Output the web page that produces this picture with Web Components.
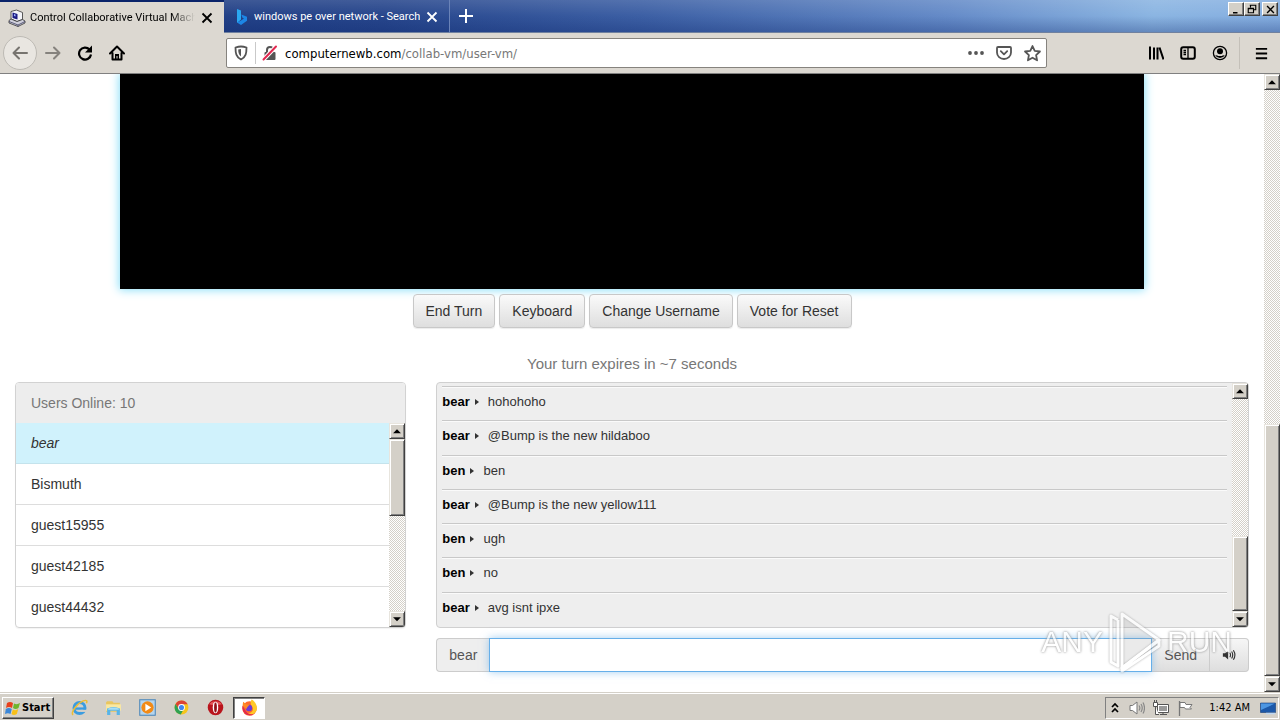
<!DOCTYPE html>
<html lang="en">
<head>
<meta charset="utf-8">
<title>Control Collaborative Virtual Machines</title>
<style>
  html, body { height: 100%; }
  body {
    margin: 0;
    display: flex;
    flex-direction: column;
    overflow: hidden;
    background: #fff;
    font-family: "Liberation Sans", Arial, sans-serif;
    font-size: 14px;
    --face: #d4d0c8;
    --ui-font: "DejaVu Sans Condensed", "DejaVu Sans", sans-serif;
    --tab-font: Roboto, "Liberation Sans", sans-serif;
  }
</style>
</head>
<body>
  <browser-tabs>
    <browser-tab active label="Control Collaborative Virtual Machi"><ui-icon name="vm" size="18"></ui-icon></browser-tab>
    <browser-tab label="windows pe over network - Search"><ui-icon name="bing" size="16"></ui-icon></browser-tab>
  </browser-tabs>
  <browser-toolbar></browser-toolbar>
  <page-view>
    <vm-screen></vm-screen>
    <vm-actions>
      <vm-button>End Turn</vm-button>
      <vm-button>Keyboard</vm-button>
      <vm-button>Change Username</vm-button>
      <vm-button>Vote for Reset</vm-button>
    </vm-actions>
    <turn-status>Your turn expires in ~7 seconds</turn-status>
    <vm-columns>
      <user-list slot="side" count="10"></user-list>
      <chat-box slot="main" username="bear"></chat-box>
    </vm-columns>
  </page-view>
  <task-bar></task-bar>
  <any-watermark></any-watermark>

<script>
const ICONS = {
  vm: `<path fill="#f4f4f8" stroke="#333" stroke-width=".8" d="M3 2.500L8.500 1l6 2.500v7L9 12.500 3 10z"/><path fill="#1c1c84" d="M4.500 3.500l5 1.500v5.500L4.500 9z"/><path fill="#9fb4ff" d="M6 5l1.500.5v2L6 7z"/><path fill="#cfcfdb" stroke="#333" stroke-width=".8" d="M1 11.500L3 10l6 2.500L14.500 10.500 17 12v2l-7 3.500-9-3.500z"/><path stroke="#3c3c60" stroke-width=".8" d="M1 12.500l9 3.500 7-3.500M10 16v1.500"/>`,
  bing: `<path fill="#2aa8f2" d="M3 0l4 1.500v9L3 14z"/><path fill="#1c86e6" d="M7 11.500l3-2-1.500-.8L7.300 5.500 13 7.800v4L7 16l-4-2.500z"/>`,
  close: `<path stroke="currentColor" stroke-width="1.800" d="M3.500 3.500l9 9m0-9l-9 9"/>`,
  plus: `<path stroke="currentColor" stroke-width="2" d="M8 1v14M1 8h14"/>`,
  back: `<path fill="none" stroke="currentColor" stroke-width="2" stroke-linecap="round" stroke-linejoin="round" d="M15 8H1.500M7 2.500L1.500 8 7 13.500"/>`,
  forward: `<path fill="none" stroke="currentColor" stroke-width="2" stroke-linecap="round" stroke-linejoin="round" d="M1 8h13.500M9 2.500L14.500 8 9 13.500"/>`,
  reload: `<path fill="none" stroke="currentColor" stroke-width="2.200" d="M12.500 4.500A6 6 0 1 0 14 9.500"/><path fill="currentColor" d="M15 .5v7H8z"/>`,
  home: `<path fill="none" stroke="currentColor" stroke-width="2" stroke-linejoin="round" stroke-linecap="round" d="M1 8.500L8 1.500l7 7M3.500 8v6.500h9V8"/><path fill="currentColor" d="M6 14V9h4v5H8.500v-3h-1v3z"/>`,
  shield: `<path fill="none" stroke="currentColor" stroke-width="1.800" stroke-linejoin="round" d="M8 1.500c2 0 4 .5 5.500 1C13.500 8 13 12 8 14.500 3 12 2.500 8 2.500 2.500 4 2 6 1.500 8 1.500z"/><path fill="currentColor" d="M8 4v7.500C6 10 5.300 8 5.200 4.400z"/>`,
  lock: `<path fill="none" stroke="#555" stroke-width="2" d="M5 7V5a3 3 0 0 1 6 0v2"/><rect x="2.500" y="7" width="11" height="8" rx="1" fill="#555"/><path stroke="#fff" stroke-width="4" d="M1.500 14.500L14 1.500"/><path stroke="#e22850" stroke-width="2" stroke-linecap="round" d="M1.500 14.500L14 1.500"/>`,
  dots: `<g fill="currentColor"><circle cx="2" cy="8" r="1.900"/><circle cx="8" cy="8" r="1.900"/><circle cx="14" cy="8" r="1.900"/></g>`,
  pocket: `<path fill="none" stroke="currentColor" stroke-width="1.800" stroke-linejoin="round" d="M2 2h12a1 1 0 0 1 1 1v4.500a7 6.500 0 0 1-14 0V3a1 1 0 0 1 1-1z"/><path fill="none" stroke="currentColor" stroke-width="1.800" stroke-linecap="round" stroke-linejoin="round" d="M4.800 6.200L8 9.300l3.200-3.100"/>`,
  star: `<path fill="none" stroke="currentColor" stroke-width="1.700" stroke-linejoin="round" d="M8 1l2.100 4.500 4.900.6-3.600 3.400.9 4.900L8 12l-4.300 2.400.9-4.900L1 6.100l4.900-.6z"/>`,
  library: `<path stroke="currentColor" stroke-width="2" d="M2 1.500v13M6 2.500v12M9.500 2.500v12M11.500 2.500l4 12"/>`,
  sidebar: `<rect x="1.200" y="2.200" width="13.600" height="11.600" rx="2" fill="none" stroke="currentColor" stroke-width="2"/><path stroke="currentColor" stroke-width="1.300" d="M8 3v10M3.500 5.500H6M3.500 7.500H6M3.500 9.500H6"/>`,
  account: `<circle cx="8" cy="8" r="6.600" fill="none" stroke="currentColor" stroke-width="1.300"/><circle cx="8" cy="6.300" r="3" fill="currentColor"/><path fill="currentColor" d="M3.200 10.200q2.300-.2 3 .8h3.600q.7-1 3-.8a5.500 5.500 0 0 1-9.600 0z"/>`,
  menu: `<path stroke="currentColor" stroke-width="2" d="M2 3h12M2 8h12M2 13h12"/>`,
  minimize: `<path stroke="#000" stroke-width="2" d="M4 13h6"/>`,
  restore: `<path fill="none" stroke="#000" stroke-width="1.500" d="M6 6V3h7v6h-3M3 7h7v6H3zM5 3h8M3 7.500h7"/>`,
  winclose: `<path stroke="#000" stroke-width="2" d="M3 3l10 10M13 3L3 13"/>`,
  up: `<path fill="#000" d="M3.500 10.500h9L8 6z"/>`,
  down: `<path fill="#000" d="M3.500 6h9L8 10.500z"/>`,
  sound: `<path fill="#333" d="M1 6h2.500L7 3v10l-3.500-3H1z"/><path fill="none" stroke="#333" stroke-width="1.300" d="M9 5.500q1.500 2.500 0 5M11 4q2.500 4 0 8M13 2.500q3.500 5.500 0 11"/>`,
  flag: `<path fill="#e8401c" d="M2 3q3-2 6 0L7 8Q4 6 1 8z"/><path fill="#6fb52c" d="M9 3.500q3 1.500 6-.5l-1.500 5q-3 2-5.500 0z"/><path fill="#3b87d8" d="M.8 9q3-2 6 0l-1.300 5Q3 12.500 0 14z"/><path fill="#f8c018" d="M7.800 9.500q3 1.500 5.500-.5l-1.500 5q-3 2-5.300 0z"/>`,
  ie: `<circle cx="8" cy="8.500" r="5.200" fill="none" stroke="#3a9ce0" stroke-width="2.800"/><path stroke="#3a9ce0" stroke-width="2.200" d="M4 9h9.500"/><path fill="#d4d0c8" d="M9 10.200h6v2H9z"/><path fill="none" stroke="#edbd33" stroke-width="1.400" d="M2 15C-1 13 6 4 11.500 1.800 15 .5 15.500 2 14.500 4"/>`,
  folder: `<path fill="#e9c65f" d="M1 3l1-1h5l1 1.500h6V12H1z"/><path fill="#f9e8a2" d="M1 5h14v6H1z"/><path fill="#58b4e8" d="M2 9q6-3 12 0v6h-3v-4H5v4H2z"/><path fill="#a7def5" d="M3 9q5-2 10 0v1H3z"/>`,
  player: `<rect x=".7" y=".7" width="14.600" height="14.600" fill="#b5d5ee" stroke="#4d87b9"/><circle cx="8" cy="8" r="5.800" fill="#f28a16"/><path fill="#fff" d="M6 4.500l5.500 3.500L6 11.500z"/>`,
  chrome: `<circle cx="8" cy="8" r="6.500" fill="#f6c51c"/><path fill="#dc4335" d="M2.400 4.700A6.500 6.500 0 0 1 13.800 5H8L5.300 9.500z"/><path fill="#2fa152" d="M2.400 4.700L5.300 9.500 9.500 10.500 7.300 14.500A6.500 6.500 0 0 1 2.400 4.700z"/><circle cx="8" cy="8" r="3.200" fill="#fff"/><circle cx="8" cy="8" r="2.400" fill="#4286ee"/>`,
  opera: `<circle cx="8" cy="8" r="7.300" fill="#b9141c"/><path fill="#e4575a" d="M2 5a7 6 0 0 1 12 0Q8 7 2 5z"/><ellipse cx="8" cy="8" rx="2.600" ry="5.500" fill="#fff"/><ellipse cx="8" cy="8" rx="1.300" ry="4.700" fill="#8f1017"/>`,
  firefox: `<circle cx="8" cy="9" r="6.800" fill="#ff6b2b"/><path fill="#ffc928" d="M10 .5c4 2 6 7 4.500 10.500-2 4-7 4-9 2 5 1 7-3 5-6-1.500-2-2-4-.5-6.500z"/><path fill="#e22b4e" d="M1.500 6q-1 5 2.500 8 4 2.500 8 .5-6 0-8-4z"/><circle cx="7.500" cy="8.500" r="3" fill="#6d3bd4"/><path fill="#ff8a24" d="M1.500 6L2 2.500 5 5l3 .5-2 2-1 2z"/>`,
  chevrons: `<path fill="none" stroke="#000" stroke-width="1.700" d="M5 7l3-3 3 3M5 12l3-3 3 3"/>`,
  speaker: `<path fill="#fff" stroke="#777" d="M1 5.500h2.500L8 2v12l-4.500-3.500H1z"/><path fill="none" stroke="#888" stroke-width="1.200" d="M10 5.500q1.700 2.500 0 5M12 4q2.500 4 0 8M14 2.500q3 5.500 0 11"/>`,
  network: `<path fill="#fff" stroke="#555" d="M4.500 4.500h11v8h-11z"/><path fill="#999" d="M6 6h8v5H6z"/><path stroke="#555" d="M7 14.500h7M10 13v1"/><path fill="#fff" stroke="#555" d="M.5 2.500h4v4h-4zM2.500 6.500v8H6M1.500 0v2M3.500 0v2"/>`,
  action: `<path fill="none" stroke="#777" stroke-width="1.300" d="M2.500 1v15"/><path fill="#fff" stroke="#777" d="M3 2.500h5l1 2h6l-2 3 1.500 1.500H8.500l-1-1.500H3z"/>`,
  desktop: `<path fill="#1c58a8" stroke="#143d78" stroke-width=".6" d="M.5 3h15v9.500H.5z"/><path fill="#4c96e2" d="M1 3.500h14L1 10z"/><path stroke="#bcd7f3" stroke-width="1.500" d="M6 13.500h9"/>`,
};

// Small helper: attach an open root and fill it from a template.
function mount(host, html) {
  const tpl = document.createElement('template');
  tpl.innerHTML = html;
  host.attachShadow({ mode: 'open' }).appendChild(tpl.content.cloneNode(true));
}

class UiIcon extends HTMLElement {
  constructor() {
    super();
    this.attachShadow({ mode: 'open' });
  }
  connectedCallback() {
    const size = this.getAttribute('size') || 16;
    this.shadowRoot.innerHTML = `
      <style>:host { display: block; flex: none; } svg { display: block; }</style>
      <svg width="${size}" height="${size}" viewBox="0 0 ${this.getAttribute('name') === 'vm' ? '18 18' : '16 16'}" fill="none" aria-hidden="true">${ICONS[this.getAttribute('name')] || ''}</svg>`;
  }
}
customElements.define('ui-icon', UiIcon);

// Classic scroll bar. before / thumb / after are track proportions.
class ClassicScrollbar extends HTMLElement {
  connectedCallback() {
    const grow = n => Number(this.getAttribute(n) || 0);
    mount(this, `
      <style>
        :host { display: flex; flex-direction: column; width: 16px; flex: none; }
        button, .thumb {
          box-sizing: border-box; background: var(--face);
          border: 1px solid; border-color: #e8e5de #404040 #404040 #e8e5de;
          box-shadow: inset 1px 1px #fff, inset -1px -1px #808080;
        }
        button { width: 16px; height: 16px; padding: 0; flex: none; display: grid; place-items: center; }
        .track {
          flex: 1; display: flex; flex-direction: column;
          background: repeating-conic-gradient(#fff 0 25%, var(--face) 0 50%) 0 0 / 2px 2px;
        }
      </style>
      <button aria-label="Scroll up"><ui-icon name="up" size="14"></ui-icon></button>
      <div class="track">
        <div style="flex: ${grow('before')} 0 0"></div>
        <div class="thumb" style="flex: ${grow('thumb')} 0 0"></div>
        <div style="flex: ${grow('after')} 0 0"></div>
      </div>
      <button aria-label="Scroll down"><ui-icon name="down" size="14"></ui-icon></button>`);
  }
}
customElements.define('classic-scrollbar', ClassicScrollbar);

class BrowserTab extends HTMLElement {
  constructor() {
    super();
    mount(this, `
      <style>
        :host {
          display: flex; align-items: center; box-sizing: border-box;
          width: 226px; height: 33px; padding: 0 9px 0 10px; gap: 4px;
          color: #fff; border-right: 1px solid #6a83b8;
          font: 11px var(--tab-font);
        }
        :host([active]) {
          width: 224px; padding-left: 8px; color: #000; background: #dcd8d1;
          border-top: 2px solid #0a246a; border-right: 0;
        }
        .label { flex: 1; white-space: nowrap; overflow: hidden; }
        :host([active]) .label {
          -webkit-mask-image: linear-gradient(to left, transparent, #000 24px);
          mask-image: linear-gradient(to left, transparent, #000 24px);
        }
        button { border: 0; padding: 0; background: none; color: inherit; }
      </style>
      <slot></slot>
      <span class="label"></span>
      <button aria-label="Close tab"><ui-icon name="close" size="16"></ui-icon></button>`);
  }
  connectedCallback() {
    this.shadowRoot.querySelector('.label').textContent = this.getAttribute('label');
  }
}
customElements.define('browser-tab', BrowserTab);

class BrowserTabs extends HTMLElement {
  constructor() {
    super();
    mount(this, `
      <style>
        :host {
          display: flex; flex: none; height: 33px; box-sizing: border-box;
          border-bottom: 1px solid #70819f;
          background:
            linear-gradient(rgba(255,255,255,.12), rgba(255,255,255,0) 50%, rgba(10,36,106,.3)),
            linear-gradient(97deg, #1c3a80, #27468c 30%, #3c5fa4 50%, #658bc8 74%, #8bb5e2 90%, #85aee0);
        }
        button { border: 0; background: none; padding: 0; color: #fff; }
        .new { width: 32px; display: grid; place-items: center; }
        .window { margin-left: auto; display: flex; align-items: flex-start; padding: 2px 2px 0 0; }
        .window button {
          width: 16px; height: 14px; box-sizing: border-box; background: var(--face);
          border: 1px solid; border-color: #fff #404040 #404040 #fff;
          box-shadow: inset -1px -1px #808080;
          display: grid; place-items: center;
        }
        .window button:last-child { margin-left: 2px; }
      </style>
      <slot></slot>
      <button class="new" aria-label="New tab"><ui-icon name="plus" size="16"></ui-icon></button>
      <div class="window">
        <button aria-label="Minimize"><ui-icon name="minimize" size="12"></ui-icon></button>
        <button aria-label="Restore"><ui-icon name="restore" size="12"></ui-icon></button>
        <button aria-label="Close"><ui-icon name="winclose" size="11"></ui-icon></button>
      </div>`);
  }
}
customElements.define('browser-tabs', BrowserTabs);

class BrowserToolbar extends HTMLElement {
  constructor() {
    super();
    mount(this, `
      <style>
        :host {
          display: flex; align-items: center; flex: none; box-sizing: border-box; height: 41px;
          background: #dcd8d1; border-bottom: 1px solid #808080; color: #000;
        }
        button { border: 0; background: none; padding: 0; color: inherit; width: 32px; height: 32px; display: grid; place-items: center; }
        nav { display: flex; flex: 0 0 226px; box-sizing: border-box; padding-left: 3px; align-items: center; }
        .back { width: 34px; height: 34px; border: 1px solid #bdbab4; border-radius: 50%; background: #e9e6e1; color: #77746f; }
        .fwd { color: #85827d; }
        .url {
          flex: 0 1 821px; box-sizing: border-box; height: 30px; display: flex; align-items: center;
          background: #fff; border: 1px solid #86837e; border-radius: 2px; color: #555;
        }
        .url button { width: 28px; }
        .sep { width: 1px; height: 22px; background: #c9c9c9; }
        .address { flex: 1; min-width: 0; padding-left: 1px; font: 13px var(--ui-font); }
        .address a { color: #777; text-decoration: none; white-space: nowrap; }
        .address b { color: #000; font-weight: normal; }
        .tools { display: flex; margin-left: auto; padding-right: 3px; }
        .tools .sep { height: 32px; margin: 0 5px 0 3px; background: #c4c0b9; }
      </style>
      <nav>
        <button class="back" aria-label="Back"><ui-icon name="back"></ui-icon></button>
        <button class="fwd" aria-label="Forward"><ui-icon name="forward"></ui-icon></button>
        <button aria-label="Reload"><ui-icon name="reload"></ui-icon></button>
        <button aria-label="Home"><ui-icon name="home"></ui-icon></button>
      </nav>
      <div class="url">
        <button aria-label="Tracking protection"><ui-icon name="shield"></ui-icon></button>
        <span class="sep"></span>
        <button aria-label="Connection is not secure"><ui-icon name="lock"></ui-icon></button>
        <div class="address"><a href="#"><b>computernewb.com</b>/collab-vm/user-vm/</a></div>
        <button aria-label="Page actions"><ui-icon name="dots"></ui-icon></button>
        <button aria-label="Save to Pocket"><ui-icon name="pocket"></ui-icon></button>
        <button aria-label="Bookmark"><ui-icon name="star" size="17"></ui-icon></button>
      </div>
      <div class="tools">
        <button aria-label="Library"><ui-icon name="library"></ui-icon></button>
        <button aria-label="Sidebars"><ui-icon name="sidebar"></ui-icon></button>
        <button aria-label="Account"><ui-icon name="account"></ui-icon></button>
        <span class="sep"></span>
        <button aria-label="Menu"><ui-icon name="menu" size="15"></ui-icon></button>
      </div>`);
  }
}
customElements.define('browser-toolbar', BrowserToolbar);

class PageView extends HTMLElement {
  constructor() {
    super();
    mount(this, `
      <style>
        :host { display: flex; flex: 1; min-height: 0; background: #fff; }
        main { flex: 1; min-width: 0; overflow: hidden; }
      </style>
      <main><slot></slot></main>
      <classic-scrollbar before="335" thumb="251" after="0"></classic-scrollbar>`);
  }
}
customElements.define('page-view', PageView);

class VmScreen extends HTMLElement {
  constructor() {
    super();
    mount(this, `
      <style>
        :host {
          display: block; max-width: 1024px; height: 215px; margin: 0 auto;
          background: #000; box-shadow: 0 0 9px 1px #8adff8;
        }
      </style>`);
  }
}
customElements.define('vm-screen', VmScreen);

class VmActions extends HTMLElement {
  constructor() {
    super();
    mount(this, `
      <style>:host { display: flex; justify-content: center; gap: 4px; margin-top: 5px; }</style>
      <slot></slot>`);
  }
}
customElements.define('vm-actions', VmActions);

class VmButton extends HTMLElement {
  constructor() {
    super();
    mount(this, `
      <style>
        :host { display: block; }
        button {
          box-sizing: border-box; height: 34px; padding: 0 12px;
          border: 1px solid #c8c8c8; border-radius: 4px;
          background: linear-gradient(#fafafa, #dedede);
          box-shadow: 0 1px 1px rgba(0,0,0,.08);
          font: inherit; line-height: 20px; color: #333;
        }
      </style>
      <button><slot></slot></button>`);
  }
}
customElements.define('vm-button', VmButton);

class TurnStatus extends HTMLElement {
  constructor() {
    super();
    mount(this, `
      <style>
        :host { display: block; margin: 26px 0 8px; text-align: center; font-size: 15px; line-height: 20px; color: #777; }
      </style>
      <slot></slot>`);
  }
}
customElements.define('turn-status', TurnStatus);

class VmColumns extends HTMLElement {
  constructor() {
    super();
    mount(this, `
      <style>
        :host { display: grid; grid-template-columns: 1fr 2fr; }
        div { padding: 0 15px; min-width: 0; }
      </style>
      <div><slot name="side"></slot></div>
      <div><slot name="main"></slot></div>`);
  }
}
customElements.define('vm-columns', VmColumns);

class UserList extends HTMLElement {
  connectedCallback() {
    const users = ['bear', 'Bismuth', 'guest15955', 'guest42185', 'guest44432'];
    mount(this, `
      <style>
        :host {
          display: block; box-sizing: border-box; height: 246px; overflow: hidden;
          border: 1px solid #d2d2d2; border-radius: 4px;
          box-shadow: 0 1px 1px rgba(0,0,0,.05);
        }
        header { height: 40px; line-height: 40px; padding: 0 15px; background: #ededed; color: #777; }
        .body { display: flex; height: 204px; }
        ul { flex: 1; margin: 0; padding: 0; list-style: none; overflow: hidden; }
        li { height: 40px; line-height: 40px; padding: 0 15px; color: #333; border-bottom: 1px solid #ddd; }
        li.self { background: #d0f2fc; font-style: italic; border-color: #c4e3ec; }
      </style>
      <header>Users Online: ${this.getAttribute('count')}</header>
      <div class="body">
        <ul>${users.map((u, i) => `<li${i ? '' : ' class="self"'}>${u}</li>`).join('')}</ul>
        <classic-scrollbar before="0" thumb="76" after="96"></classic-scrollbar>
      </div>`);
  }
}
customElements.define('user-list', UserList);

class ChatBox extends HTMLElement {
  connectedCallback() {
    const log = [
      ['bear', 'hohohoho'],
      ['bear', '@Bump is the new hildaboo'],
      ['ben', 'ben'],
      ['bear', '@Bump is the new yellow111'],
      ['ben', 'ugh'],
      ['ben', 'no'],
      ['bear', 'avg isnt ipxe'],
    ];
    mount(this, `
      <style>
        :host { display: block; }
        .log {
          display: flex; box-sizing: border-box; height: 246px; overflow: hidden;
          background: #eee; border: 1px solid #d0d0d0; border-radius: 4px;
        }
        ul {
          flex: 1; margin: 0; padding: 3px 5px 1px; list-style: none;
          display: grid; grid-auto-rows: 1fr; font-size: 13px; line-height: 18px; color: #333;
        }
        li { border-top: 1px solid #c8c8c8; box-shadow: inset 0 1px #fafafa; padding-top: 6px; display: flex; }
        b { color: #000; }
        i { width: 0; height: 0; margin: 6px 9px 0 5px; border: solid transparent; border-width: 3px 0 3px 4px; border-left-color: #333; }
        form { display: flex; height: 34px; margin-top: 10px; }
        label, button {
          box-sizing: border-box; border: 1px solid #ccc; font: inherit; color: #555; padding: 0 12px;
          background: #eee; line-height: 32px;
        }
        label { border-right: 0; border-radius: 4px 0 0 4px; }
        input {
          flex: 1; min-width: 0; box-sizing: border-box; border: 1px solid #66afe9; outline: 0;
          padding: 0 12px; font: inherit; background: #fff; z-index: 1;
          box-shadow: 0 0 8px rgba(102,175,233,.6);
        }
        button { background: linear-gradient(#f6f6f6, #dedede); border-left: 0; }
        button:last-child { border-left: 0; border-radius: 0 4px 4px 0; }
      </style>
      <div class="log">
        <ul>${log.map(([who, text]) => `<li><b>${who}</b><i></i><span>${text}</span></li>`).join('')}</ul>
        <classic-scrollbar before="138" thumb="74" after="0"></classic-scrollbar>
      </div>
      <form onsubmit="return false">
        <label for="message">${this.getAttribute('username')}</label>
        <input id="message" type="text" autocomplete="off">
        <button>Send</button>
        <button type="button" aria-label="Mute"><ui-icon name="sound" size="14"></ui-icon></button>
      </form>`);
  }
}
customElements.define('chat-box', ChatBox);

class TaskBar extends HTMLElement {
  constructor() {
    super();
    const apps = [['ie', 'Internet Explorer'], ['folder', 'Explorer'], ['player', 'Media Player'], ['chrome', 'Chrome'], ['opera', 'Opera'], ['firefox', 'Firefox']];
    mount(this, `
      <style>
        :host {
          display: flex; align-items: center; flex: none; box-sizing: border-box; height: 28px;
          padding: 2px 0 0 2px; background: var(--face);
          border-top: 1px solid var(--face); box-shadow: inset 0 1px #fff;
          font: 11px var(--ui-font); color: #000;
        }
        button { border: 0; padding: 0; background: none; display: grid; place-items: center; }
        .start {
          display: flex; align-items: center; gap: 1px; box-sizing: border-box; width: 52px; height: 22px; padding-left: 2px;
          background: var(--face); border: 1px solid; border-color: #fff #404040 #404040 #fff;
          box-shadow: inset -1px -1px #808080; font: bold 11px var(--ui-font);
        }
        .apps { display: flex; align-items: center; margin-left: 9px; gap: 2px; }
        .apps button { width: 32px; height: 22px; }
        .apps button:last-child {
          background: #fff; box-sizing: border-box;
          border: 1px solid; border-color: #404040 #fff #fff #404040; box-shadow: inset 1px 1px #808080;
        }
        .tray {
          margin-left: auto; display: flex; align-items: center; box-sizing: border-box; height: 22px;
          padding: 0 2px 0 1px; gap: 8px; margin-right: 1px;
          border: 1px solid; border-color: #808080 #fff #fff #808080;
        }
        time { padding: 0 2px 0 8px; }
        .tray ui-icon:first-child { margin-right: -2px; }
      </style>
      <button class="start"><ui-icon name="flag"></ui-icon>Start</button>
      <div class="apps">${apps.map(([n, l]) => `<button aria-label="${l}"><ui-icon name="${n}" size="17"></ui-icon></button>`).join('')}</div>
      <div class="tray">
        <ui-icon name="chevrons"></ui-icon>
        <ui-icon name="speaker"></ui-icon>
        <ui-icon name="network"></ui-icon>
        <ui-icon name="action"></ui-icon>
        <time>1:42 AM</time>
        <ui-icon name="desktop"></ui-icon>
      </div>`);
  }
}
customElements.define('task-bar', TaskBar);

// Recorder's stamp floating over the lower right corner.
class AnyWatermark extends HTMLElement {
  constructor() {
    super();
    mount(this, `
      <style>
        :host {
          position: fixed; right: 48px; bottom: 46px; z-index: 5; pointer-events: none;
          display: flex; align-items: center; gap: 5px; opacity: .7;
          font-size: 30px; line-height: 64px; color: #fff;
          text-shadow: 0 0 2px #888, 0 0 3px #999;
        }
        svg { display: block; filter: drop-shadow(0 0 1px #888); }
      </style>
      <span>ANY</span>
      <svg width="54" height="64" viewBox="0 0 54 64" stroke="#fff" stroke-width="3" stroke-linejoin="round">
        <path fill="none" d="M10 10L3 6v46l7 4V10"/>
        <path fill="rgba(160,160,160,.15)" d="M14 4L51 30 14 58z"/>
        <path fill="rgba(140,140,140,.15)" d="M14 58L51 30v6L14 61z"/>
      </svg>
      <span>RUN</span>`);
  }
}
customElements.define('any-watermark', AnyWatermark);
</script>
</body>
</html>
